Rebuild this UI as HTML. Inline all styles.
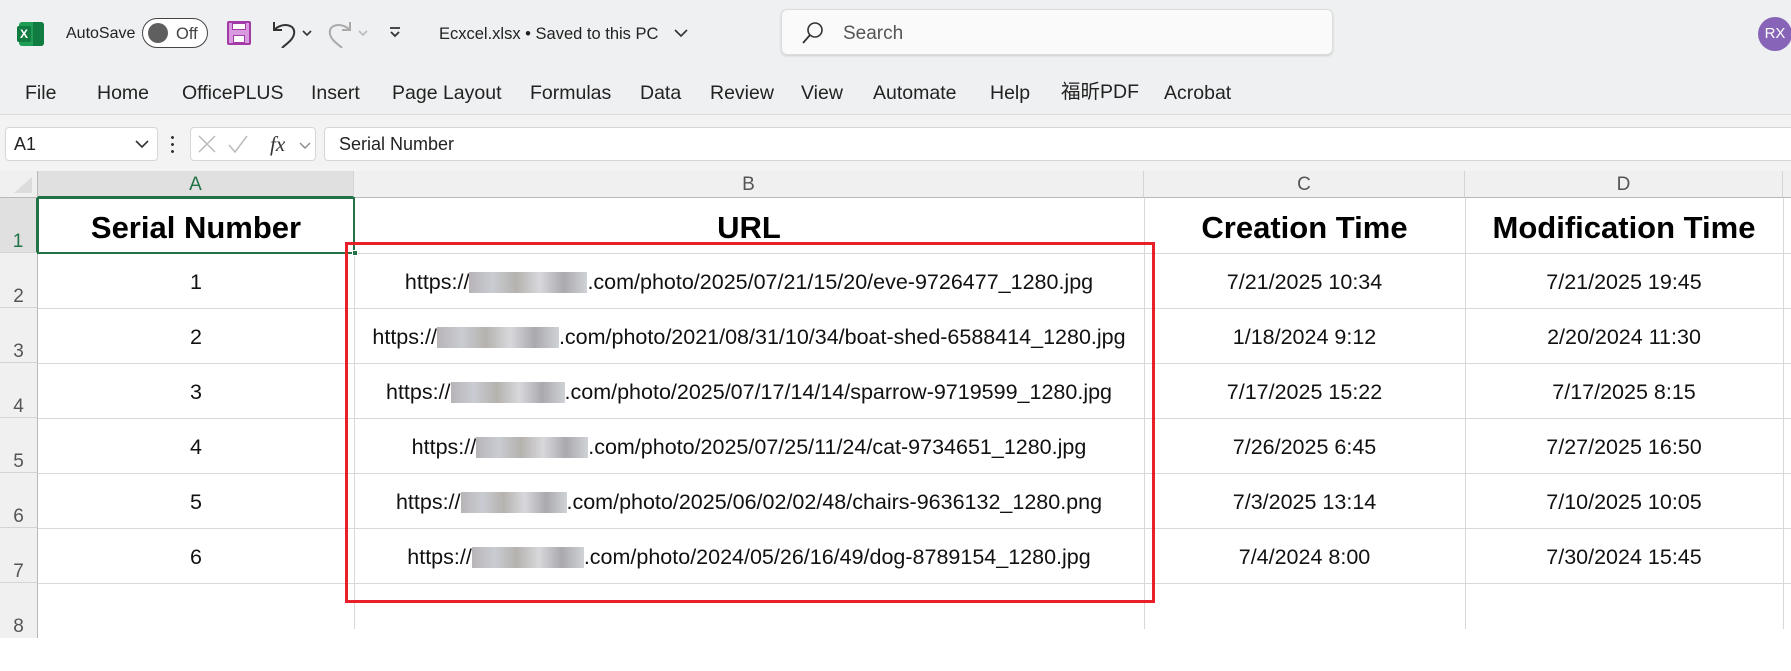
<!DOCTYPE html>
<html><head><meta charset="utf-8"><style>
*{margin:0;padding:0;box-sizing:border-box}
body{width:1791px;height:629px;overflow:hidden;background:#fff;font-family:"Liberation Sans","Noto Sans CJK SC",sans-serif;position:relative;color:#222}
.a{position:absolute}
.top{left:0;top:0;width:1791px;height:115px;background:#eff0f1;border-bottom:1px solid #dcdcdc}
.tab{top:81px;font-size:19.5px;color:#222;line-height:24px}
.fb{left:0;top:115px;width:1791px;height:56px;background:#f3f3f3}
.box{background:#fff;border:1px solid #d6d6d6;border-radius:4px}
.colh{top:171px;height:27px;background:#f0f0f0;border-bottom:1px solid #b8b8b8;font-size:19px;color:#555;text-align:center;line-height:27px;border-right:1px solid #d4d4d4}
.rowh{left:0;width:38px;background:#f0f0f0;border-right:1px solid #b8b8b8;border-bottom:1px solid #d4d4d4;font-size:19px;color:#555;text-align:center}
.hl{left:38px;width:1753px;height:1px;background:#d9d9d9}
.vl{top:198px;width:1px;height:431px;background:#d9d9d9}
.c{font-size:21.5px;color:#111;text-align:center;white-space:nowrap;line-height:26px}
.h{font-size:31px;font-weight:bold;color:#000;text-align:center;white-space:nowrap;line-height:36px}
.bl{display:inline-block;height:21px;vertical-align:-4px;background:linear-gradient(90deg,#b8b4b8,#c9ccd2,#b5b2ae,#d8d8dc,#aaa9ad,#cfd2d6)}
</style></head><body>
<div class="a top"></div>
<div class="a" style="left:19px;top:22px;width:25px;height:24px;background:#1f9d55;border-radius:3px"></div>
<div class="a" style="left:33px;top:22px;width:11px;height:24px;background:#107c41;border-radius:0 3px 3px 0"></div>
<div class="a" style="left:17px;top:26px;width:14px;height:16px;background:#107c41;color:#fff;font-size:12px;font-weight:bold;text-align:center;line-height:16px;border-radius:2px">X</div>
<div class="a" style="left:66px;top:24px;font-size:16px;line-height:20px">AutoSave</div>
<div class="a" style="left:142px;top:18px;width:66px;height:30px;border:1.5px solid #444;border-radius:15px;background:#fff"></div>
<div class="a" style="left:148px;top:23px;width:20px;height:20px;border-radius:50%;background:#5f5f5f"></div>
<div class="a" style="left:176px;top:24px;font-size:16.5px;line-height:20px;color:#444">Off</div>
<div class="a" style="left:227px;top:21px;width:24px;height:24px;background:#d99ae0;border:2px solid #a23aa8;border-radius:2px"></div>
<div class="a" style="left:232px;top:23px;width:14px;height:7px;background:#fff;border:1.5px solid #a23aa8"></div>
<div class="a" style="left:233px;top:35px;width:12px;height:8px;background:#fff;border:1.5px solid #a23aa8"></div>
<svg class="a" style="left:268px;top:18px" width="50" height="30"><path d="M6 4 L6 12 L14 12 M6 12 C14 4 28 6 26 16 C25 22 18 26 14 30" fill="none" stroke="#333" stroke-width="2"/><path d="M35 13 l4 4 l4 -4" fill="none" stroke="#333" stroke-width="1.6"/></svg>
<svg class="a" style="left:326px;top:18px" width="50" height="30"><path d="M24 4 L24 12 L16 12 M24 12 C16 4 2 6 4 16 C5 22 12 26 16 30" fill="none" stroke="#aaa" stroke-width="2"/><path d="M33 13 l4 4 l4 -4" fill="none" stroke="#bbb" stroke-width="1.6"/></svg>
<svg class="a" style="left:388px;top:26px" width="14" height="14"><path d="M2 2h10M3 6l4 4l4-4" fill="none" stroke="#333" stroke-width="1.8"/></svg>
<div class="a" style="left:439px;top:24px;font-size:16.5px;line-height:20px">Ecxcel.xlsx • Saved to this PC</div>
<svg class="a" style="left:673px;top:28px" width="16" height="12"><path d="M2 2l6 6l6-6" fill="none" stroke="#333" stroke-width="1.6"/></svg>
<div class="a" style="left:781px;top:9px;width:552px;height:46px;background:#fafafa;border:1px solid #dcdcdc;border-radius:6px;box-shadow:0 1px 2px rgba(0,0,0,.15)"></div>
<svg class="a" style="left:800px;top:20px" width="26" height="26"><circle cx="15" cy="10" r="7" fill="none" stroke="#333" stroke-width="1.6"/><path d="M10 15L3 23" stroke="#333" stroke-width="1.8"/></svg>
<div class="a" style="left:843px;top:23px;font-size:19px;line-height:22px;color:#555">Search</div>
<div class="a" style="left:1758px;top:17px;width:34px;height:34px;border-radius:50%;background:#8764b8;color:#fff;font-size:15px;line-height:34px;text-align:center">RX</div>
<div class="a tab" style="left:25px">File</div>
<div class="a tab" style="left:97px">Home</div>
<div class="a tab" style="left:182px">OfficePLUS</div>
<div class="a tab" style="left:311px">Insert</div>
<div class="a tab" style="left:392px">Page Layout</div>
<div class="a tab" style="left:530px">Formulas</div>
<div class="a tab" style="left:640px">Data</div>
<div class="a tab" style="left:710px">Review</div>
<div class="a tab" style="left:801px">View</div>
<div class="a tab" style="left:873px">Automate</div>
<div class="a tab" style="left:990px">Help</div>
<div class="a tab" style="left:1061px;top:80px">福昕PDF</div>
<div class="a tab" style="left:1164px">Acrobat</div>
<div class="a fb"></div>
<div class="a box" style="left:5px;top:127px;width:153px;height:34px"></div>
<div class="a" style="left:14px;top:134px;font-size:18px">A1</div>
<svg class="a" style="left:134px;top:138px" width="16" height="12"><path d="M2 3l6 6l6-6" fill="none" stroke="#333" stroke-width="1.6"/></svg>
<div class="a" style="left:171px;top:134px;width:3px;height:20px;background:radial-gradient(circle,#333 1.3px,transparent 1.6px) 0 0/3px 7px"></div>
<div class="a box" style="left:190px;top:127px;width:126px;height:34px"></div>
<svg class="a" style="left:196px;top:133px" width="120" height="24"><path d="M3 3l16 16M19 3L3 19" stroke="#bbb" stroke-width="1.5"/><path d="M33 12l6 7l12-16" fill="none" stroke="#bbb" stroke-width="1.5"/><text x="74" y="18" font-family="Liberation Serif" font-style="italic" font-size="21" fill="#333">fx</text><path d="M104 10l5 5l5-5" fill="none" stroke="#888" stroke-width="1.4"/></svg>
<div class="a box" style="left:324px;top:127px;width:1480px;height:34px"></div>
<div class="a" style="left:339px;top:134px;font-size:18px">Serial Number</div>
<div class="a" style="left:0;top:171px;width:38px;height:27px;background:#f0f0f0;border-right:1px solid #b8b8b8;border-bottom:1px solid #b8b8b8"></div>
<svg class="a" style="left:10px;top:175px" width="24" height="20"><path d="M22 2V18H4Z" fill="#dcdcdc"/></svg>
<div class="a colh" style="left:38px;width:316px;background:#e0e0e0;color:#217346;border-bottom:2px solid #217346">A</div>
<div class="a colh" style="left:354px;width:790px">B</div>
<div class="a colh" style="left:1144px;width:321px">C</div>
<div class="a colh" style="left:1465px;width:318px">D</div>
<div class="a colh" style="left:1783px;width:20px"></div>
<div class="a rowh" style="top:198px;height:55px;line-height:88px;background:#e0e0e0;color:#217346;border-right:2px solid #217346">1</div>
<div class="a rowh" style="top:253px;height:55px;line-height:88px">2</div>
<div class="a rowh" style="top:308px;height:55px;line-height:88px">3</div>
<div class="a rowh" style="top:363px;height:55px;line-height:88px">4</div>
<div class="a rowh" style="top:418px;height:55px;line-height:88px">5</div>
<div class="a rowh" style="top:473px;height:55px;line-height:88px">6</div>
<div class="a rowh" style="top:528px;height:55px;line-height:88px">7</div>
<div class="a rowh" style="top:583px;height:55px;line-height:88px;border-bottom:none">8</div>
<div class="a hl" style="top:253px"></div><div class="a hl" style="top:308px"></div><div class="a hl" style="top:363px"></div><div class="a hl" style="top:418px"></div><div class="a hl" style="top:473px"></div><div class="a hl" style="top:528px"></div><div class="a hl" style="top:583px"></div>
<div class="a vl" style="left:354px"></div><div class="a vl" style="left:1144px"></div><div class="a vl" style="left:1465px"></div><div class="a vl" style="left:1783px"></div>
<div class="a" style="left:37px;top:197px;width:318px;height:57px;border:2px solid #217346"></div>
<div class="a" style="left:352px;top:250px;width:6px;height:6px;background:#217346;border:1px solid #fff"></div>
<div class="a h" style="left:38px;top:210px;width:316px">Serial Number</div>
<div class="a h" style="left:354px;top:210px;width:790px">URL</div>
<div class="a h" style="left:1144px;top:210px;width:321px">Creation Time</div>
<div class="a h" style="left:1465px;top:210px;width:318px">Modification Time</div>
<div class="a c" style="left:38px;top:269px;width:316px">1</div>
<div class="a c" style="left:354px;top:269px;width:790px">https://<span class="bl" style="width:118px"></span>.com/photo/2025/07/21/15/20/eve-9726477_1280.jpg</div>
<div class="a c" style="left:1144px;top:269px;width:321px">7/21/2025 10:34</div>
<div class="a c" style="left:1465px;top:269px;width:318px">7/21/2025 19:45</div>
<div class="a c" style="left:38px;top:324px;width:316px">2</div>
<div class="a c" style="left:354px;top:324px;width:790px">https://<span class="bl" style="width:122px"></span>.com/photo/2021/08/31/10/34/boat-shed-6588414_1280.jpg</div>
<div class="a c" style="left:1144px;top:324px;width:321px">1/18/2024 9:12</div>
<div class="a c" style="left:1465px;top:324px;width:318px">2/20/2024 11:30</div>
<div class="a c" style="left:38px;top:379px;width:316px">3</div>
<div class="a c" style="left:354px;top:379px;width:790px">https://<span class="bl" style="width:114px"></span>.com/photo/2025/07/17/14/14/sparrow-9719599_1280.jpg</div>
<div class="a c" style="left:1144px;top:379px;width:321px">7/17/2025 15:22</div>
<div class="a c" style="left:1465px;top:379px;width:318px">7/17/2025 8:15</div>
<div class="a c" style="left:38px;top:434px;width:316px">4</div>
<div class="a c" style="left:354px;top:434px;width:790px">https://<span class="bl" style="width:112px"></span>.com/photo/2025/07/25/11/24/cat-9734651_1280.jpg</div>
<div class="a c" style="left:1144px;top:434px;width:321px">7/26/2025 6:45</div>
<div class="a c" style="left:1465px;top:434px;width:318px">7/27/2025 16:50</div>
<div class="a c" style="left:38px;top:489px;width:316px">5</div>
<div class="a c" style="left:354px;top:489px;width:790px">https://<span class="bl" style="width:106px"></span>.com/photo/2025/06/02/02/48/chairs-9636132_1280.png</div>
<div class="a c" style="left:1144px;top:489px;width:321px">7/3/2025 13:14</div>
<div class="a c" style="left:1465px;top:489px;width:318px">7/10/2025 10:05</div>
<div class="a c" style="left:38px;top:544px;width:316px">6</div>
<div class="a c" style="left:354px;top:544px;width:790px">https://<span class="bl" style="width:112px"></span>.com/photo/2024/05/26/16/49/dog-8789154_1280.jpg</div>
<div class="a c" style="left:1144px;top:544px;width:321px">7/4/2024 8:00</div>
<div class="a c" style="left:1465px;top:544px;width:318px">7/30/2024 15:45</div>
<div class="a" style="left:345px;top:242px;width:810px;height:361px;border:3px solid #e8202a"></div>
</body></html>
